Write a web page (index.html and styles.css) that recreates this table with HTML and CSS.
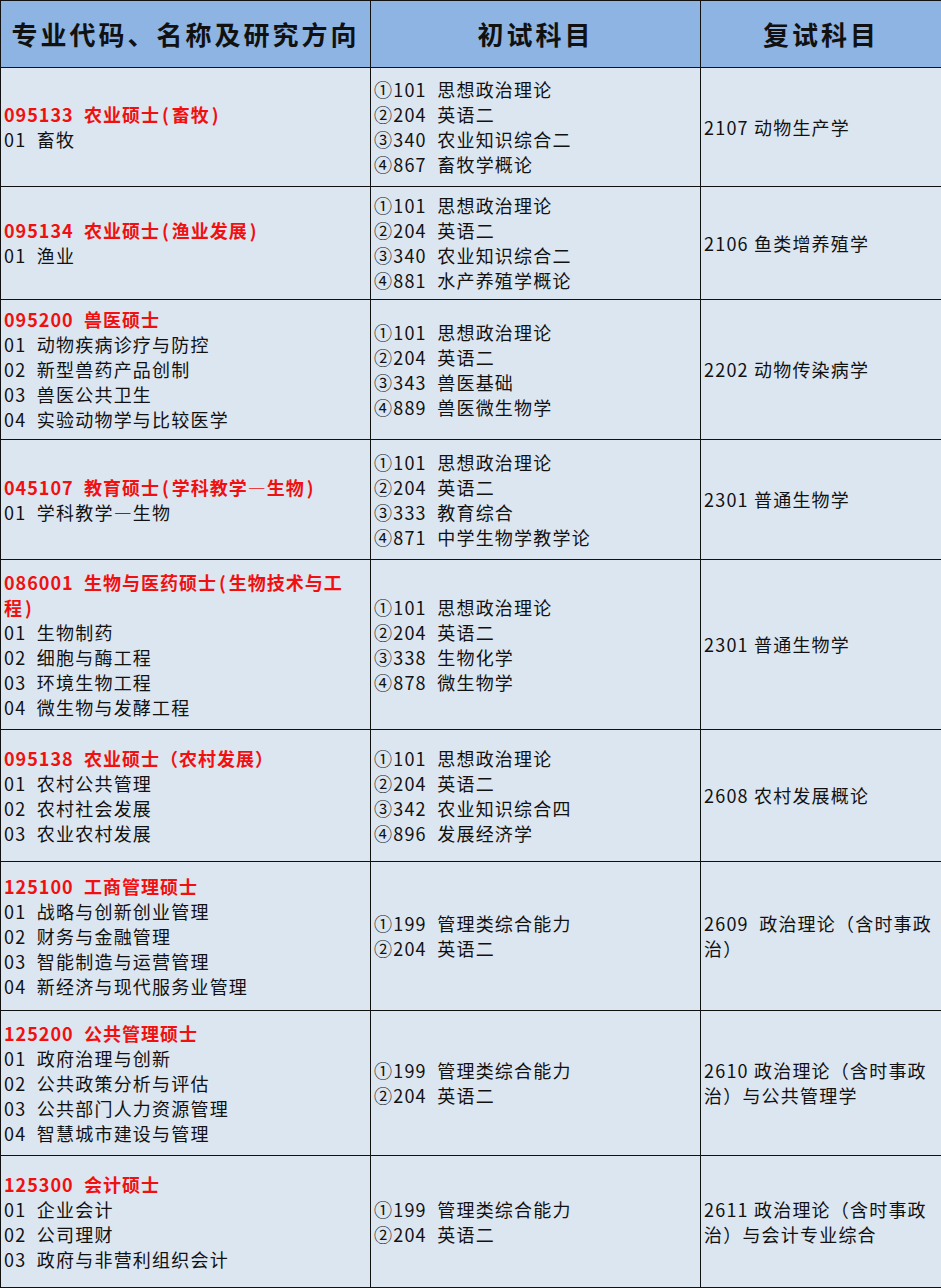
FILE: index.html
```html
<!DOCTYPE html>
<html lang="zh">
<head>
<meta charset="utf-8">
<title>招生专业目录</title>
<link rel="stylesheet" href="styles.css">
</head>
<body>
<table class="catalog">
  <colgroup>
    <col class="c1"><col class="c2"><col class="c3">
  </colgroup>
  <thead>
    <tr class="head">
      <th>专业代码、名称及研究方向</th>
      <th>初试科目</th>
      <th>复试科目</th>
    </tr>
  </thead>
  <tbody>
    <tr class="r1">
      <td><div class="major">095133&nbsp; 农业硕士<span class="p">(</span>畜牧<span class="p">)</span></div><div>01&nbsp; 畜牧</div></td>
      <td><div>①101&nbsp; 思想政治理论</div><div>②204&nbsp; 英语二</div><div>③340&nbsp; 农业知识综合二</div><div>④867&nbsp; 畜牧学概论</div></td>
      <td>2107 动物生产学</td>
    </tr>
    <tr class="r2">
      <td><div class="major">095134&nbsp; 农业硕士<span class="p">(</span>渔业发展<span class="p">)</span></div><div>01&nbsp; 渔业</div></td>
      <td><div>①101&nbsp; 思想政治理论</div><div>②204&nbsp; 英语二</div><div>③340&nbsp; 农业知识综合二</div><div>④881&nbsp; 水产养殖学概论</div></td>
      <td>2106 鱼类增养殖学</td>
    </tr>
    <tr class="r3">
      <td><div class="major">095200&nbsp; 兽医硕士</div><div>01&nbsp; 动物疾病诊疗与防控</div><div>02&nbsp; 新型兽药产品创制</div><div>03&nbsp; 兽医公共卫生</div><div>04&nbsp; 实验动物学与比较医学</div></td>
      <td><div>①101&nbsp; 思想政治理论</div><div>②204&nbsp; 英语二</div><div>③343&nbsp; 兽医基础</div><div>④889&nbsp; 兽医微生物学</div></td>
      <td>2202 动物传染病学</td>
    </tr>
    <tr class="r4">
      <td><div class="major">045107&nbsp; 教育硕士<span class="p">(</span>学科教学—生物<span class="p">)</span></div><div>01&nbsp; 学科教学—生物</div></td>
      <td><div>①101&nbsp; 思想政治理论</div><div>②204&nbsp; 英语二</div><div>③333&nbsp; 教育综合</div><div>④871&nbsp; 中学生物学教学论</div></td>
      <td>2301 普通生物学</td>
    </tr>
    <tr class="r5">
      <td><div class="major">086001&nbsp; 生物与医药硕士<span class="p">(</span>生物技术与工<br>程<span class="p">)</span></div><div>01&nbsp; 生物制药</div><div>02&nbsp; 细胞与酶工程</div><div>03&nbsp; 环境生物工程</div><div>04&nbsp; 微生物与发酵工程</div></td>
      <td><div>①101&nbsp; 思想政治理论</div><div>②204&nbsp; 英语二</div><div>③338&nbsp; 生物化学</div><div>④878&nbsp; 微生物学</div></td>
      <td>2301 普通生物学</td>
    </tr>
    <tr class="r6">
      <td><div class="major">095138&nbsp; 农业硕士（农村发展）</div><div>01&nbsp; 农村公共管理</div><div>02&nbsp; 农村社会发展</div><div>03&nbsp; 农业农村发展</div></td>
      <td><div>①101&nbsp; 思想政治理论</div><div>②204&nbsp; 英语二</div><div>③342&nbsp; 农业知识综合四</div><div>④896&nbsp; 发展经济学</div></td>
      <td>2608 农村发展概论</td>
    </tr>
    <tr class="r7">
      <td><div class="major">125100&nbsp; 工商管理硕士</div><div>01&nbsp; 战略与创新创业管理</div><div>02&nbsp; 财务与金融管理</div><div>03&nbsp; 智能制造与运营管理</div><div>04&nbsp; 新经济与现代服务业管理</div></td>
      <td><div>①199&nbsp; 管理类综合能力</div><div>②204&nbsp; 英语二</div></td>
      <td>2609&nbsp; 政治理论（含时事政<br>治）</td>
    </tr>
    <tr class="r8">
      <td><div class="major">125200&nbsp; 公共管理硕士</div><div>01&nbsp; 政府治理与创新</div><div>02&nbsp; 公共政策分析与评估</div><div>03&nbsp; 公共部门人力资源管理</div><div>04&nbsp; 智慧城市建设与管理</div></td>
      <td><div>①199&nbsp; 管理类综合能力</div><div>②204&nbsp; 英语二</div></td>
      <td>2610 政治理论（含时事政<br>治）与公共管理学</td>
    </tr>
    <tr class="r9">
      <td><div class="major">125300&nbsp; 会计硕士</div><div>01&nbsp; 企业会计</div><div>02&nbsp; 公司理财</div><div>03&nbsp; 政府与非营利组织会计</div></td>
      <td><div>①199&nbsp; 管理类综合能力</div><div>②204&nbsp; 英语二</div></td>
      <td>2611 政治理论（含时事政<br>治）与会计专业综合</td>
    </tr>
  </tbody>
</table>
</body>
</html>
```

FILE: styles.css
```css
html, body {
  margin: 0;
  padding: 0;
  background: #dce6f1;
}
.catalog {
  width: 941px;
  border-collapse: collapse;
  table-layout: fixed;
  font-family: "Noto Sans CJK SC", "Noto Sans", sans-serif;
  color: #111;
}
.c1 { width: 370px; }
.c2 { width: 330px; }
.c3 { width: 241px; }
.catalog th,
.catalog td {
  border: 1px solid #111;
  vertical-align: middle;
}
.head th {
  height: 66px;
  background: #8db4e2;
  font-size: 26px;
  font-weight: bold;
  letter-spacing: 3px;
  text-align: center;
  padding: 0;
  line-height: 30px;
}
.catalog td {
  background: #dce6f1;
  font-size: 18px;
  line-height: 25px;
  letter-spacing: 1.2px;
  padding: 0 3px;
  text-align: left;
  white-space: nowrap;
}
.major {
  color: #f01010;
  font-weight: bold;
  letter-spacing: 1px;
}
.major .p {
  margin: 0 2px;
}
.r1 td { height: 118px; }
.r2 td { height: 112px; }
.r3 td { height: 139px; }
.r4 td { height: 119px; }
.r5 td { height: 169px; }
.r6 td { height: 131px; }
.r7 td { height: 148px; }
.r8 td { height: 144px; }
.r9 td { height: 131px; }
```
